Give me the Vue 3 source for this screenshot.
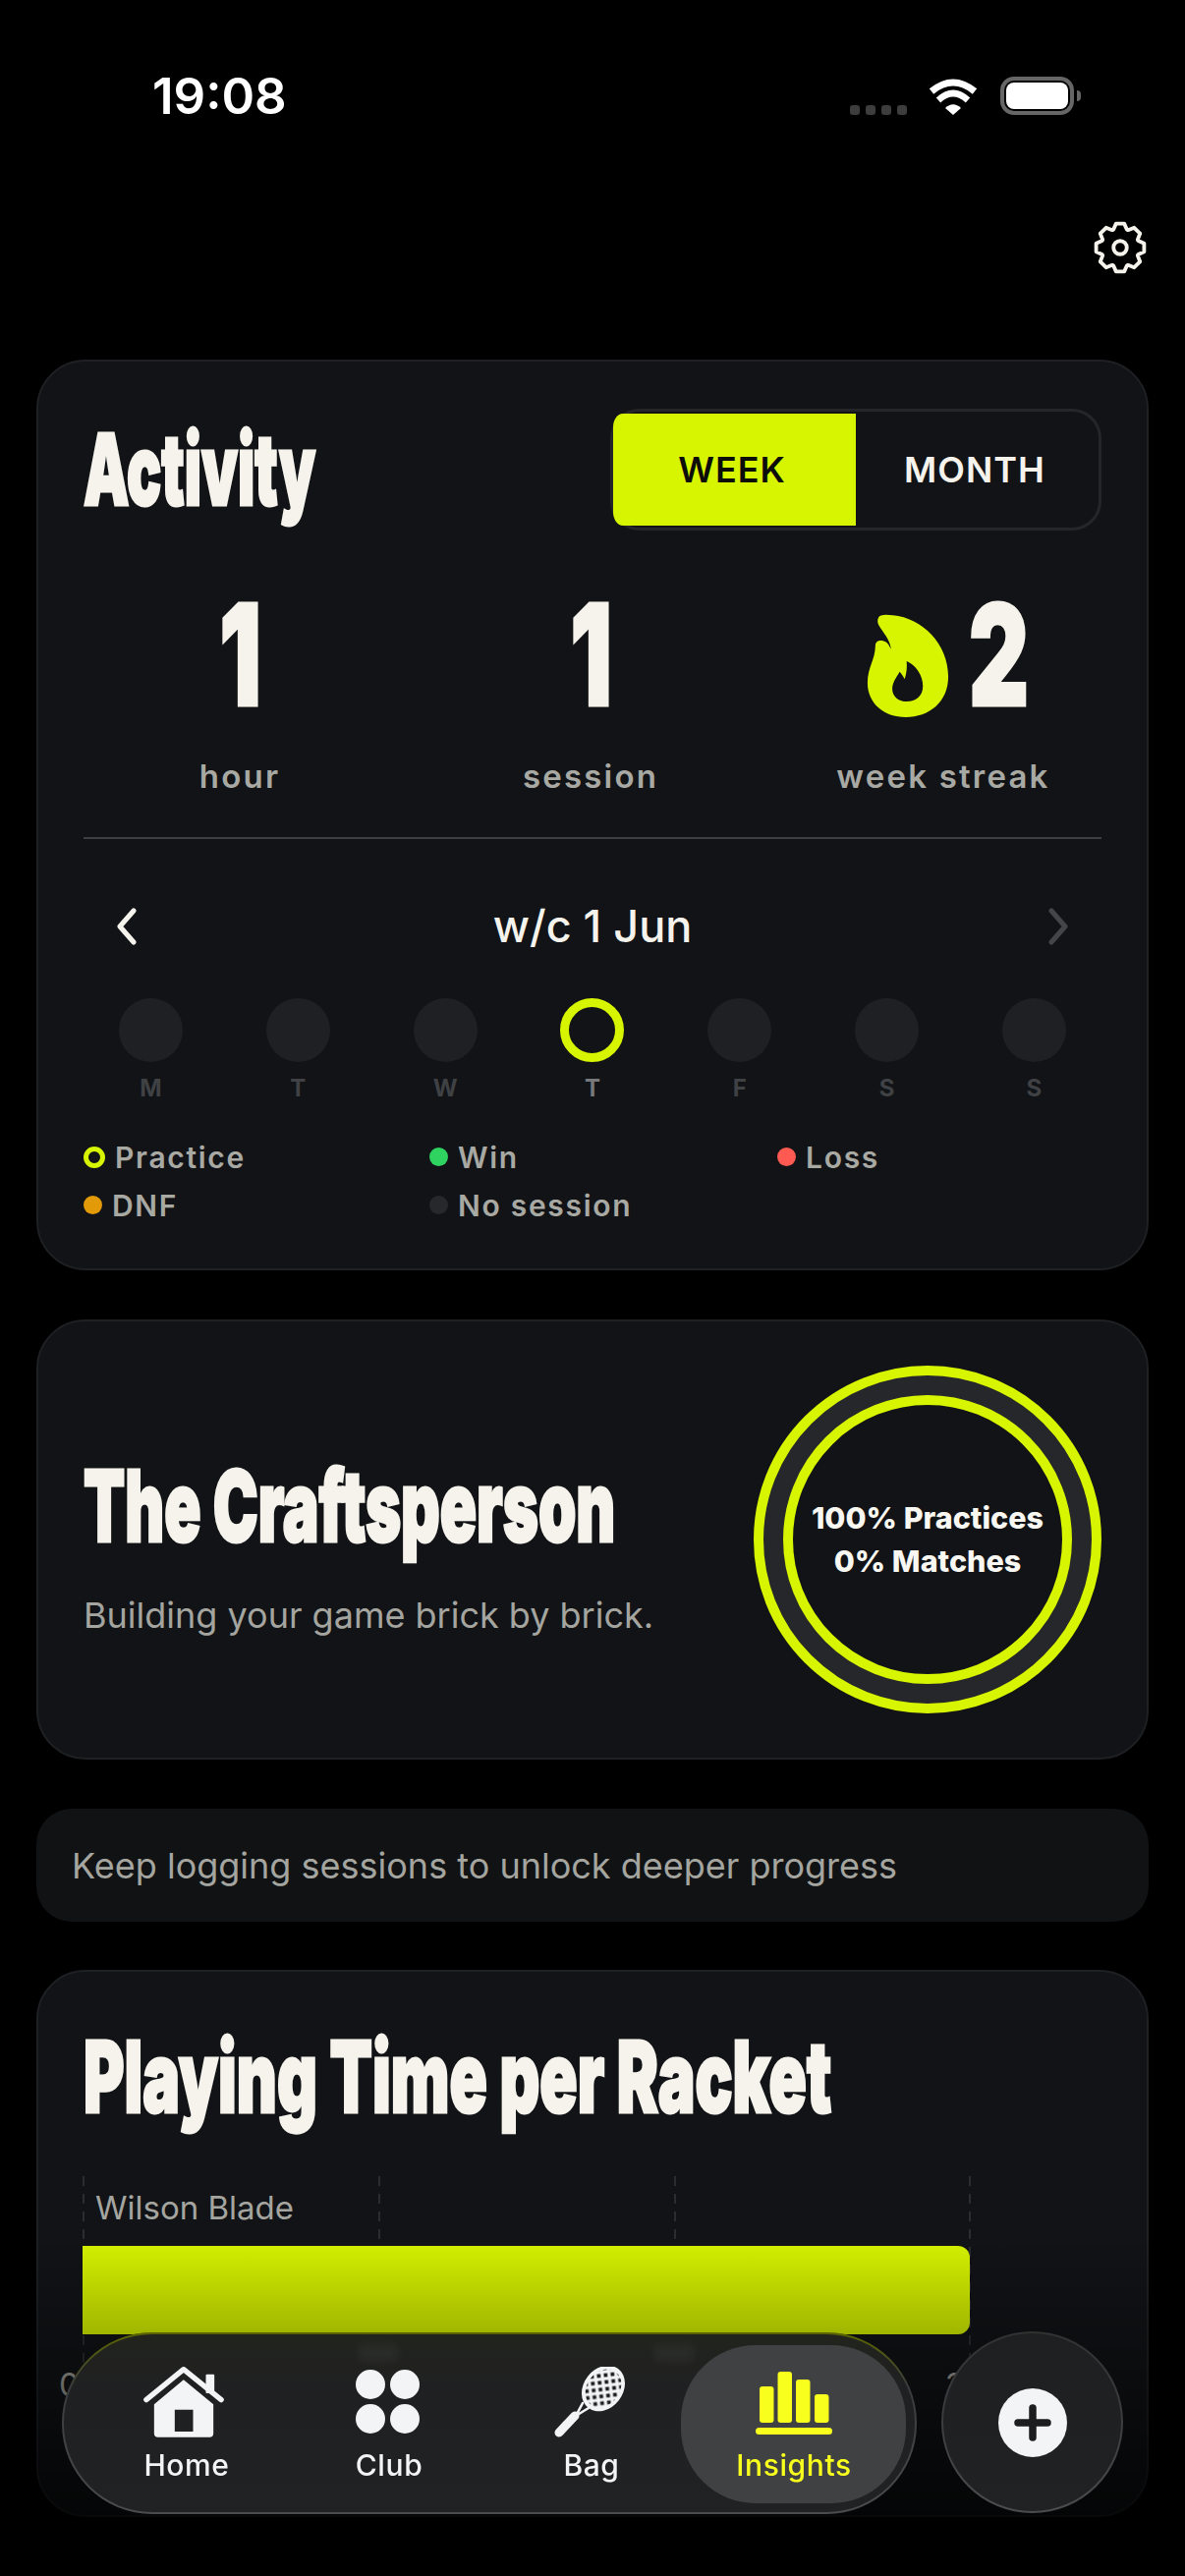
<template>
  <div class="page">
    <div class="status">
      <span class="time">19:08</span>
      <div class="status-right">
        <div class="signal"><i v-for="n in 4" :key="n"></i></div>
        <svg class="wifi" width="50" height="37" viewBox="0 0 50 37">
          <path d="M3 13Q25-5 47 13" fill="none" stroke="#fff" stroke-width="7" />
          <path d="M10 22Q25 8 40 22" fill="none" stroke="#fff" stroke-width="6.5" />
          <path d="M25 37L17 30Q25 22.5 33 30Z" fill="#fff" />
        </svg>
        <div class="battery"><span></span></div>
      </div>
    </div>

    <div class="gear-row">
      <svg width="54" height="54" viewBox="0 0 24 24">
        <path :d="gearPath" fill="none" stroke="#f5f3ec" stroke-width="1.7" stroke-linejoin="round" />
        <circle cx="12" cy="12" r="3" fill="none" stroke="#f5f3ec" stroke-width="1.7" />
      </svg>
    </div>

    <div class="cards">
      <section class="card activity">
        <div class="activity-head">
          <h1 class="display activity-title">Activity</h1>
          <div class="toggle">
            <span class="seg seg-on">WEEK</span>
            <span class="seg">MONTH</span>
          </div>
        </div>

        <div class="stats">
          <div class="stat">
            <div class="num-row"><div class="num">1</div></div>
            <div class="stat-label">hour</div>
          </div>
          <div class="stat">
            <div class="num-row"><div class="num">1</div></div>
            <div class="stat-label">session</div>
          </div>
          <div class="stat">
            <div class="num-row">
              <svg class="flame" width="84" height="106" viewBox="130 138 252 320">
                <path fill="#d7f400" fill-rule="evenodd" d="M165 150C170 138 190 140 210 142C300 150 380 230 380 330C380 410 320 455 250 455C180 455 132 410 132 350C132 300 155 280 156 235C156 218 175 215 190 225C198 232 203 245 204 245C200 215 180 195 168 175C162 165 162 157 165 150ZM252 283C280 295 302 325 302 360C302 390 280 407 253 407C228 407 208 392 208 368C208 350 218 335 231 315C236 322 243 330 246 338C252 320 254 300 252 283Z" />
              </svg>
              <div class="num">2</div>
            </div>
            <div class="stat-label">week streak</div>
          </div>
        </div>

        <div class="divider"></div>

        <div class="week-nav">
          <svg width="24" height="38" viewBox="0 0 24 38"><path d="M19 3L5 19L19 35" fill="none" stroke="#f5f3ec" stroke-width="5" stroke-linecap="round" stroke-linejoin="round" /></svg>
          <span class="week-label">w/c 1 Jun</span>
          <svg width="24" height="38" viewBox="0 0 24 38"><path d="M5 3L19 19L5 35" fill="none" stroke="#434547" stroke-width="5" stroke-linecap="round" stroke-linejoin="round" /></svg>
        </div>

        <div class="days">
          <div v-for="(d, i) in days" :key="i" class="day">
            <div class="day-dot" :class="{ practice: d.practice }"></div>
            <div class="day-name" :class="{ today: d.practice }">{{ d.name }}</div>
          </div>
        </div>

        <div class="legend">
          <div v-for="l in legend" :key="l.label" class="legend-item">
            <i class="legend-dot" :class="l.kind"></i>
            <span>{{ l.label }}</span>
          </div>
        </div>
      </section>

      <section class="card persona">
        <div class="persona-text">
          <h2 class="display persona-title">The Craftsperson</h2>
          <p class="persona-sub">Building your game brick by brick.</p>
        </div>
        <div class="ring">
          <div class="ring-inner">
            <span>100% Practices</span>
            <span>0% Matches</span>
          </div>
        </div>
      </section>

      <section class="hint">Keep logging sessions to unlock deeper progress</section>

      <section class="card racket">
        <h2 class="display racket-title">Playing Time per Racket</h2>
        <div class="chart">
          <i v-for="g in gridlines" :key="g" class="gridline" :style="{ left: g + 'px' }"></i>
          <div class="bar-label">Wilson Blade</div>
          <div class="bar"></div>
          <div class="axis">
            <span v-for="t in ticks" :key="t">{{ t }}</span>
          </div>
        </div>
      </section>
    </div>

    <div class="fade"></div>

    <nav class="tabbar">
      <i class="ghost ghost-a"></i>
      <i class="ghost ghost-b"></i>
      <a class="tab">
        <svg class="tab-icon home-icon" width="82" height="72" viewBox="290 147 245 216">
          <rect x="480" y="170" width="26" height="58" rx="3" fill="#f3f4f5" />
          <path d="M298 248L412 155L527 248" fill="none" stroke="#f3f4f5" stroke-width="16" stroke-linecap="round" stroke-linejoin="round" />
          <path fill="#f3f4f5" fill-rule="evenodd" d="M412 187L503 262V350a12 12 0 0 1-12 12H334a12 12 0 0 1-12-12V262ZM385 278V345H441V278Z" />
        </svg>
        <span>Home</span>
      </a>
      <a class="tab">
        <div class="tab-icon club-icon"><i v-for="n in 4" :key="n"></i></div>
        <span>Club</span>
      </a>
      <a class="tab">
        <svg class="tab-icon bag-icon" width="74" height="72" viewBox="0 0 74 72">
          <defs>
            <pattern id="mesh" width="7" height="7" patternUnits="userSpaceOnUse" patternTransform="rotate(45)">
              <rect width="7" height="7" fill="#f3f4f5" />
              <rect x="1.6" y="1.6" width="3.8" height="3.8" fill="#1c1d1e" />
            </pattern>
          </defs>
          <ellipse cx="51" cy="22" rx="20" ry="25" transform="rotate(38 51 22)" fill="#f3f4f5" />
          <ellipse cx="51" cy="22" rx="16.5" ry="21" transform="rotate(38 51 22)" fill="url(#mesh)" />
          <path d="M36 42L23 50M30 37L23 50" stroke="#f3f4f5" stroke-width="2.6" stroke-linecap="round" fill="none" />
          <path d="M22 50L6 67" stroke="#f3f4f5" stroke-width="9" stroke-linecap="round" />
        </svg>
        <span>Bag</span>
      </a>
      <a class="tab tab-on">
        <svg class="tab-icon" width="78" height="64" viewBox="0 0 78 64">
          <rect x="4" y="15" width="14.5" height="37" rx="3" fill="#f8ff1c" />
          <rect x="22.5" y="0" width="14.5" height="52" rx="3" fill="#f8ff1c" />
          <rect x="41" y="8" width="14.5" height="44" rx="3" fill="#f8ff1c" />
          <rect x="60" y="23" width="14.5" height="29" rx="3" fill="#f8ff1c" />
          <rect x="0" y="57" width="78" height="7" rx="3.5" fill="#f8ff1c" />
        </svg>
        <span>Insights</span>
      </a>
    </nav>

    <button class="plus">
      <svg width="70" height="70" viewBox="0 0 70 70">
        <circle cx="35" cy="35" r="35" fill="#f3f4f5" />
        <path d="M35 20V50M20 35H50" stroke="#1c1d1e" stroke-width="7.5" stroke-linecap="round" />
      </svg>
    </button>
  </div>
</template>

<script setup>
const days = [
  { name: 'M' },
  { name: 'T' },
  { name: 'W' },
  { name: 'T', practice: true },
  { name: 'F' },
  { name: 'S' },
  { name: 'S' }
]

const legend = [
  { label: 'Practice', kind: 'ring-dot' },
  { label: 'Win', kind: 'win' },
  { label: 'Loss', kind: 'loss' },
  { label: 'DNF', kind: 'dnf' },
  { label: 'No session', kind: 'none' }
]

const gridlines = [0, 301, 602, 902]
const ticks = ['0.0', '1.0', '2.0', '3.0']

// 8 tooth gear outline
const buildGear = () => {
  const parts = []
  const teeth = 8
  for (let i = 0; i < teeth; i++) {
    const a = (i / teeth) * Math.PI * 2 - Math.PI / 2
    const pts = [
      [8.7, a - 0.36],
      [11, a - 0.17],
      [11, a + 0.17],
      [8.7, a + 0.36]
    ]
    pts.forEach(([r, t]) => {
      const x = (12 + r * Math.cos(t)).toFixed(2)
      const y = (12 + r * Math.sin(t)).toFixed(2)
      parts.push(`${parts.length ? 'L' : 'M'}${x} ${y}`)
    })
  }
  return parts.join('') + 'Z'
}

const gearPath = buildGear()
</script>

<style>
html,
body {
  margin: 0;
  background: #000;
}
</style>

<style scoped>
.page {
  position: relative;
  width: 1206px;
  height: 2622px;
  overflow: hidden;
  background: #000;
  font-family: Inter, "Liberation Sans", sans-serif;
  color: #f5f3ec;
}

.status {
  height: 150px;
  box-sizing: border-box;
  padding: 68px 113px 0 155px;
  display: flex;
  justify-content: space-between;
  align-items: flex-start;
}

.time {
  font-size: 51px;
  line-height: 60px;
  font-weight: 600;
  color: #fff;
}

.status-right {
  position: relative;
  display: flex;
  align-items: flex-end;
  margin-top: 10px;
}

.signal {
  display: flex;
  gap: 6px;
  margin-right: 22px;
}

.signal i {
  width: 10px;
  height: 10px;
  border-radius: 3px;
  background: #3d3d3d;
}

.wifi {
  margin-right: 23px;
}

.battery {
  position: relative;
  width: 75px;
  height: 39px;
  box-sizing: border-box;
  border: 4px solid #666;
  border-radius: 14px;
  padding: 2px;
}

.battery span {
  display: block;
  height: 100%;
  background: #fff;
  border-radius: 8px;
}

.battery::after {
  content: "";
  position: absolute;
  right: -11px;
  top: 10px;
  width: 4px;
  height: 11px;
  background: #666;
  border-radius: 0 5px 5px 0;
}

.gear-row {
  height: 216px;
  box-sizing: border-box;
  padding: 75px 39px 0 0;
  display: flex;
  justify-content: flex-end;
  align-items: flex-start;
}

.cards {
  display: flex;
  flex-direction: column;
  gap: 50px;
  padding: 0 37px;
}

.card {
  box-sizing: border-box;
  border: 2px solid #1e2023;
  border-radius: 50px;
  background: #111316;
  padding: 0 46px;
}

.display {
  margin: 0;
  font-family: Inter, "Liberation Sans", sans-serif;
  font-weight: 900;
  font-size: 100px;
  line-height: 100px;
  white-space: nowrap;
  color: #f5f3ec;
  transform-origin: left center;
  -webkit-text-stroke: 3px #f5f3ec;
}

.activity {
  height: 927px;
  padding-top: 48px;
}

.activity-head {
  display: flex;
  justify-content: space-between;
  align-items: center;
}

.activity-title {
  width: 235px;
  transform: scaleX(0.585);
}

.toggle {
  box-sizing: border-box;
  width: 500px;
  height: 124px;
  border: 3px solid #24262a;
  border-radius: 30px;
  padding: 2px 0;
  display: flex;
}

.seg {
  flex: 1;
  display: flex;
  align-items: center;
  justify-content: center;
  padding-right: 5px;
  font-size: 36px;
  font-weight: 600;
  letter-spacing: 1px;
}

.seg-on {
  background: #d7f400;
  color: #0c0d0a;
  border-radius: 10px 0 0 10px / 14px 0 0 14px;
}

.stats {
  display: grid;
  grid-template-columns: 318px 396px 322px;
  margin-top: 61px;
}

.stat {
  display: flex;
  flex-direction: column;
  align-items: center;
}

.num-row {
  display: flex;
  align-items: center;
  height: 130px;
  gap: 23px;
}

.flame {
  margin: 24px 0 0 6px;
}

.num {
  width: 55px;
  display: flex;
  justify-content: center;
  font-size: 143px;
  line-height: 130px;
  font-weight: 900;
  color: #f5f3ec;
  transform: scaleX(0.66);
  -webkit-text-stroke: 3px #f5f3ec;
}

.stat-label {
  margin-top: 39px;
  font-size: 33px;
  line-height: 40px;
  font-weight: 600;
  letter-spacing: 2.2px;
  color: #a9a9a4;
}

.divider {
  margin-top: 42px;
  height: 1.5px;
  background: #3c3e41;
}

.week-nav {
  margin-top: 59px;
  height: 60px;
  padding: 0 32px;
  display: flex;
  align-items: center;
  justify-content: space-between;
}

.week-label {
  font-size: 45px;
  line-height: 60px;
  font-weight: 500;
  color: #f5f3ec;
}

.days {
  margin-top: 43px;
  padding: 0 36px;
  display: flex;
  justify-content: space-between;
}

.day {
  width: 65px;
  display: flex;
  flex-direction: column;
  align-items: center;
  gap: 12px;
}

.day-dot {
  box-sizing: border-box;
  width: 65px;
  height: 65px;
  border-radius: 50%;
  background: #1e2023;
}

.day-dot.practice {
  background: transparent;
  border: 9px solid #d7f400;
}

.day-name {
  font-size: 24px;
  line-height: 30px;
  font-weight: 700;
  color: #3f4144;
}

.day-name.today {
  color: #77787a;
}

.legend {
  margin-top: 36px;
  display: grid;
  grid-template-columns: 352px 354px 1fr;
  row-gap: 11px;
}

.legend-item {
  display: flex;
  align-items: center;
  gap: 10px;
  font-size: 30px;
  line-height: 38px;
  font-weight: 600;
  letter-spacing: 1.7px;
  color: #a9a9a4;
}

.legend-dot {
  box-sizing: border-box;
  width: 19px;
  height: 19px;
  border-radius: 50%;
}

.ring-dot {
  width: 22px;
  height: 22px;
  border: 5px solid #d7f400;
}

.win {
  background: #2fd35f;
}

.loss {
  background: #ff5a52;
}

.dnf {
  background: #e39a09;
}

.none {
  background: #26282b;
}

.persona {
  height: 448px;
  display: flex;
  justify-content: space-between;
  align-items: center;
}

.persona-text {
  margin-top: 18px;
}

.persona-title {
  width: 540px;
  transform: scaleX(0.615);
}

.persona-sub {
  margin: 36px 0 0;
  font-size: 36px;
  line-height: 50px;
  color: #a5a5a0;
}

.ring {
  box-sizing: border-box;
  width: 354px;
  height: 354px;
  border-radius: 50%;
  border: 10px solid #d7f400;
  background: #25272a;
  display: flex;
  align-items: center;
  justify-content: center;
}

.ring-inner {
  box-sizing: border-box;
  width: 294px;
  height: 294px;
  border-radius: 50%;
  border: 10px solid #d7f400;
  background: #111316;
  display: flex;
  flex-direction: column;
  align-items: center;
  justify-content: center;
  font-size: 30.5px;
  line-height: 44px;
  font-weight: 800;
  color: #f8f7f2;
}

.hint {
  box-sizing: border-box;
  height: 115px;
  border-radius: 36px;
  background: #101214;
  padding-left: 36px;
  display: flex;
  align-items: center;
  font-size: 36px;
  color: #a5a5a0;
}

.racket {
  height: 557px;
  margin-top: -1px;
  padding-top: 57px;
}

.racket-title {
  width: 760px;
  transform: scaleX(0.633);
}

.chart {
  position: relative;
  width: 903px;
  margin-top: 51px;
  margin-left: -1px;
  padding-top: 7px;
}

.gridline {
  position: absolute;
  top: 0;
  width: 2px;
  height: 225px;
  background: repeating-linear-gradient(to bottom, #2a2c2f 0 10px, transparent 10px 18px);
}

.bar-label {
  position: relative;
  padding-left: 13px;
  font-size: 33px;
  line-height: 50px;
  color: #a5a5a0;
}

.bar {
  position: relative;
  margin-top: 14px;
  height: 90px;
  border-radius: 0 12px 12px 0;
  background: #d7f400;
}

.axis {
  position: relative;
  margin-top: 33px;
  display: flex;
  justify-content: space-between;
  margin-left: -24px;
  margin-right: -24px;
  font-size: 33px;
  line-height: 36px;
  color: #a5a5a0;
}

.fade {
  position: absolute;
  left: 0;
  right: 0;
  top: 2275px;
  bottom: 0;
  background: linear-gradient(to bottom, rgba(0, 0, 0, 0), rgba(0, 0, 0, 0.88));
}

.tabbar {
  position: absolute;
  left: 63px;
  top: 2374px;
  box-sizing: border-box;
  width: 870px;
  height: 185px;
  border: 2px solid transparent;
  border-radius: 92px;
  background:
    linear-gradient(rgba(29, 30, 31, 0.92), rgba(29, 30, 31, 0.92)) padding-box,
    linear-gradient(to bottom, #5c6600 0, #3a3b3c 30%, #4a4c4d 100%) border-box;
  backdrop-filter: blur(3px);
  padding: 33px 0 0 22px;
  display: flex;
}

.ghost {
  position: absolute;
  top: 10px;
  width: 40px;
  height: 18px;
  background: rgba(255, 255, 255, 0.045);
  filter: blur(4px);
}

.ghost-a {
  left: 300px;
}

.ghost-b {
  left: 601px;
}

.tab {
  position: relative;
  width: 206px;
  display: flex;
  flex-direction: column;
  align-items: center;
  font-size: 30px;
  line-height: 36px;
  font-weight: 500;
  letter-spacing: 0.6px;
  color: #f3f4f5;
}

.tab > span {
  position: relative;
  margin-top: 10px;
}

.tab-icon {
  position: relative;
  height: 72px;
  flex: none;
}

.home-icon {
  margin-left: -6px;
}

.bag-icon {
  margin-left: -5px;
}

.club-icon {
  display: grid;
  grid-template-columns: 30px 30px;
  grid-auto-rows: 30px;
  gap: 5px;
  padding-top: 3px;
  margin-left: -3px;
  box-sizing: border-box;
}

.club-icon i {
  border-radius: 50%;
  background: #f3f4f5;
}

.tab-on {
  color: #f8ff1c;
}

.tab-on .tab-icon {
  height: 64px;
  margin-top: 5px;
  margin-bottom: 3px;
}

.tab-on::before {
  content: "";
  position: absolute;
  left: -12px;
  right: -11px;
  top: -22px;
  height: 161px;
  border-radius: 76px;
  background: #3f4143;
}

.plus {
  position: absolute;
  left: 958px;
  top: 2373px;
  box-sizing: border-box;
  width: 185px;
  height: 185px;
  padding: 0;
  border: 2px solid transparent;
  border-radius: 50%;
  background:
    linear-gradient(rgba(29, 30, 31, 0.92), rgba(29, 30, 31, 0.92)) padding-box,
    linear-gradient(to bottom, #303130 0, #3a3b3c 40%, #4a4c4d 100%) border-box;
  backdrop-filter: blur(3px);
  display: flex;
  align-items: center;
  justify-content: center;
}
</style>
